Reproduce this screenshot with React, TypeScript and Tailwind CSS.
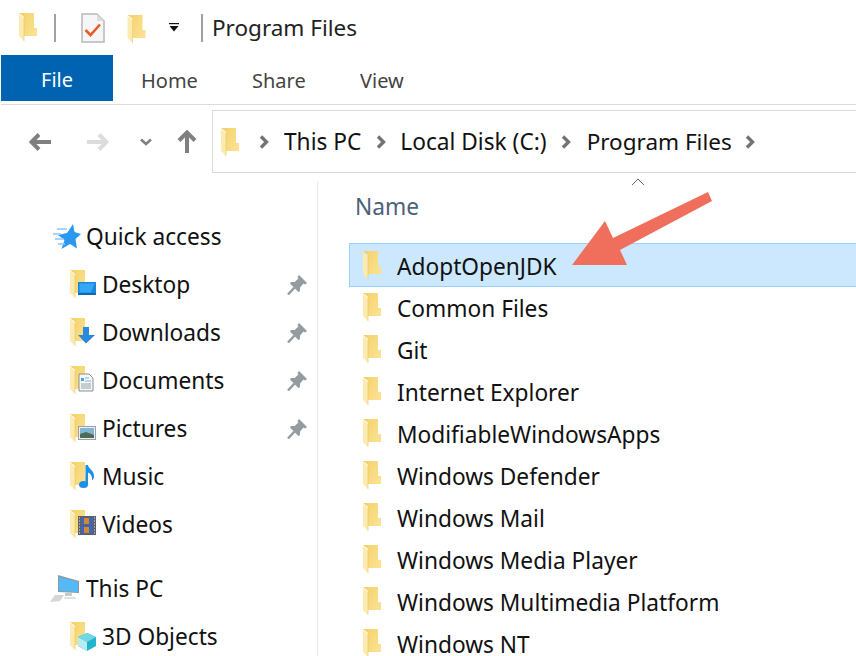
import { useId, type ReactNode } from 'react'

const mainFolders = [
  'AdoptOpenJDK',
  'Common Files',
  'Git',
  'Internet Explorer',
  'ModifiableWindowsApps',
  'Windows Defender',
  'Windows Mail',
  'Windows Media Player',
  'Windows Multimedia Platform',
  'Windows NT',
]

// folder drawn in an 18x28 box
function FolderShape() {
  const id = useId().replace(/[^a-zA-Z0-9]/g, '')
  return (
    <g>
      <defs>
        <linearGradient id={id} x1="0" y1="0" x2="1" y2="0.6">
          <stop offset="0" stopColor="#f3d067" />
          <stop offset="1" stopColor="#fbe08f" />
        </linearGradient>
      </defs>
      <path d="M0 0H15V15H18V23H5V4Z" fill={`url(#${id})`} />
      <path d="M0 1L5 5V28L0 23Z" fill="#fdeab0" />
      <path d="M5 5V28" stroke="#e8c660" strokeWidth="0.6" />
    </g>
  )
}

function Folder({ w = 18, h = 28 }: { w?: number; h?: number }) {
  return (
    <svg width={w} height={h} viewBox="0 0 18 28" className="shrink-0">
      <FolderShape />
    </svg>
  )
}

function NavFolder({ children }: { children: ReactNode }) {
  return (
    <svg width="28" height="30" viewBox="0 0 28 30" className="shrink-0">
      <FolderShape />
      {children}
    </svg>
  )
}

function Chevron() {
  return (
    <svg width="10" height="14" viewBox="0 0 10 14" className="shrink-0">
      <path d="M2 1.5L7.5 7L2 12.5" fill="none" stroke="#737373" strokeWidth="3.4" />
    </svg>
  )
}

function Pin() {
  return (
    <svg width="20" height="20" viewBox="0 0 20 20">
      <path d="M12 0L20 8L18 9.5L16.5 8.5L13 12.5L13 16L11.5 17L3 8.5L4 7L7.5 7L11.5 3.5L10.5 2Z" fill="#939ba1" />
      <path d="M7.5 12.5L1 19.5" stroke="#939ba1" strokeWidth="2.4" />
    </svg>
  )
}

const overlays: Record<string, ReactNode> = {
  Desktop: (
    <g>
      <rect x="8" y="12" width="18" height="13" fill="#1b86d8" />
      <path d="M9.5 13.5H24.5L21 22.5H9.5Z" fill="#35a8f5" />
      <path d="M8 23H26V25H8Z" fill="#0f69b4" />
    </g>
  ),
  Downloads: (
    <path d="M13 9H19V17H25L16 25.5L8 17H13Z" fill="#2a88dc" />
  ),
  Documents: (
    <g>
      <path d="M9 8H19L23 12V25H9Z" fill="#f4f6f8" stroke="#8b8f92" strokeWidth="1" />
      <path d="M11 12H14V15H11Z" fill="#4aa3e0" />
      <path d="M15 12H19M15 15H21" stroke="#7eb4da" strokeWidth="1" />
      <path d="M11 18H21M11 20H21M11 22H21" stroke="#93a4b0" strokeWidth="1" />
    </g>
  ),
  Pictures: (
    <g>
      <rect x="8.5" y="12.5" width="17" height="13" fill="#eef1f2" stroke="#9aa0a3" />
      <rect x="10" y="14" width="14" height="10" fill="#7fb6d6" />
      <path d="M10 20L16 18L24 21V24H10Z" fill="#4d6b57" />
    </g>
  ),
  Music: (
    <g>
      <ellipse cx="13.5" cy="22.5" rx="4.5" ry="3.5" fill="#1c8fe6" />
      <path d="M15.5 22V3H18C18.5 7 24 8 24 14C24 16 23 17.5 22 18.5C22.5 14 20.5 11.5 18 10.5V22Z" fill="#1c8fe6" />
    </g>
  ),
  Videos: (
    <g>
      <rect x="8" y="6" width="18" height="19" fill="#5c6066" />
      <rect x="11" y="7.5" width="12" height="7.5" fill="#3f66b8" />
      <rect x="11" y="16" width="12" height="7.5" fill="#3f66b8" />
      <path d="M14 8H19V14H14ZM14 17H19V23H14Z" fill="#d08a2e" />
      <path d="M9 8H10M9 11H10M9 14H10M9 17H10M9 20H10M9 23H10M24 8H25M24 11H25M24 14H25M24 17H25M24 20H25M24 23H25" stroke="#e4e6e8" strokeWidth="1.2" />
    </g>
  ),
  '3D Objects': (
    <g>
      <path d="M17 11L26 15V24L17 29L8 24V15Z" fill="#24b3cf" />
      <path d="M8 15L17 20V29L8 24Z" fill="#b5eef2" />
      <path d="M17 11L26 15L17 20L8 15Z" fill="#6fd8e4" />
    </g>
  ),
}

function NavItem({ label, pinned }: { label: string; pinned?: boolean }) {
  return (
    <div className="flex h-[48px] items-center pl-[70px]">
      <NavFolder>{overlays[label]}</NavFolder>
      <span className="ml-[4px] w-[185px]">{label}</span>
      {pinned && <Pin />}
    </div>
  )
}

function StarIcon() {
  return (
    <svg width="28" height="26" viewBox="0 0 28 26" className="shrink-0">
      <path d="M20 0L21.5 8L28 10L22.5 15L24 24.5L17 20L8.5 25L11.5 16L5 11L14 9Z" fill="#2c97f0" />
      <path d="M4 5H14M0 10H8M2 15H11M5 20H12" stroke="#8cc8f5" strokeWidth="1.3" />
    </svg>
  )
}

function PcIcon() {
  return (
    <svg width="32" height="28" viewBox="0 0 32 28" className="shrink-0">
      <path d="M8 0L29 6V18L8 17Z" fill="#8a9aa5" />
      <path d="M9 2L28 7V17L9 16Z" fill="#55b9f5" />
      <path d="M15 18H22V21H15Z" fill="#c5cacd" />
      <path d="M5 20L14 20L10 26L0 27Z" fill="#d4d7d9" />
      <path d="M15 22H25L26 24H14Z" fill="#dfe1e3" />
    </svg>
  )
}

export default function App() {
  return (
    <div className="flex h-[656px] w-[856px] flex-col overflow-hidden bg-white text-[22.7px] text-[#111] font-['Noto_Sans',sans-serif]">
      {/* title bar */}
      <div className="flex h-[55px] shrink-0 items-center">
        <div className="ml-[19px] flex h-[28px] -translate-y-[1px]">
          <Folder />
        </div>
        <div className="ml-[17px] h-[28px] w-[2px] bg-[#a0a0a0]" />
        <svg width="24" height="30" viewBox="0 0 24 30" className="ml-[25px] shrink-0">
          <path d="M1 1H16L23 8V29H1Z" fill="#f5f6f8" stroke="#b8b8b8" strokeWidth="1.5" />
          <path d="M16 1V8H23Z" fill="#dcdcdc" />
          <path d="M4.5 17L9.5 22L19 11.5" fill="none" stroke="#ee5a24" strokeWidth="2.6" />
        </svg>
        <div className="ml-[22px] flex translate-y-[1px]">
          <Folder w={19} />
        </div>
        <svg width="12" height="9" viewBox="0 0 12 9" className="ml-[22px] shrink-0">
          <path d="M1 0.5H11" stroke="#111" strokeWidth="1.4" />
          <path d="M1.5 3H10.5L6 8.5Z" fill="#111" />
        </svg>
        <div className="ml-[21px] h-[28px] w-[2px] bg-[#a0a0a0]" />
        <span className="ml-[9px] text-[22.5px] text-[#222]">Program Files</span>
      </div>

      {/* ribbon tabs */}
      <div className="flex h-[46px] shrink-0 items-center pl-px text-[20px] text-[#444]">
        <div className="flex h-full w-[112px] items-center justify-center bg-[#0063b1] pt-[4px] text-white">File</div>
        <span className="ml-[28px] w-[111px] pt-[6px]">Home</span>
        <span className="w-[108px] pt-[6px]">Share</span>
        <span className="pt-[6px]">View</span>
      </div>
      <div className="ml-px mt-[3px] h-[1px] shrink-0 bg-[#dcdcdc]" />

      {/* nav + address */}
      <div className="mt-[5px] flex h-[63px] shrink-0">
        <div className="flex w-[212px] shrink-0 items-center pl-[29px]">
          <svg width="22" height="18" viewBox="0 0 22 18" className="shrink-0">
            <path d="M22 9H3M10 1.5L2.5 9L10 16.5" fill="none" stroke="#7f7f7f" strokeWidth="4" />
          </svg>
          <svg width="22" height="18" viewBox="0 0 22 18" className="ml-[36px] shrink-0">
            <path d="M0 9H19M12 1.5L19.5 9L12 16.5" fill="none" stroke="#dcdcdc" strokeWidth="4" />
          </svg>
          <svg width="12" height="8" viewBox="0 0 12 8" className="ml-[31px] shrink-0">
            <path d="M1 1.5L6 6L11 1.5" fill="none" stroke="#808080" strokeWidth="2.6" />
          </svg>
          <svg width="20" height="23" viewBox="0 0 20 23" className="ml-[25px] shrink-0">
            <path d="M10 23V3M2 10.5L10 2.5L18 10.5" fill="none" stroke="#7f7f7f" strokeWidth="4" />
          </svg>
        </div>
        <div className="flex flex-1 items-center border-y border-l border-[#d9d9d9] pl-[7px] text-[#111]">
          <Folder w={20} />
          <div className="ml-[19px]"><Chevron /></div>
          <span className="ml-[15px] pt-[2px]">This PC</span>
          <div className="ml-[15px]"><Chevron /></div>
          <span className="ml-[14px] pt-[2px]">Local Disk (C:)</span>
          <div className="ml-[14px]"><Chevron /></div>
          <span className="ml-[16px] text-[22.5px]">Program Files</span>
          <div className="ml-[13px]"><Chevron /></div>
        </div>
      </div>

      {/* body */}
      <div className="mt-[8px] flex min-h-0 flex-1">
        <div className="w-[318px] shrink-0 border-r border-[#e8e8e8] pt-[32px]">
          <div className="flex h-[48px] items-center pl-[53px]">
            <StarIcon />
            <span className="ml-[5px]">Quick access</span>
          </div>
          <NavItem label="Desktop" pinned />
          <NavItem label="Downloads" pinned />
          <NavItem label="Documents" pinned />
          <NavItem label="Pictures" pinned />
          <NavItem label="Music" />
          <NavItem label="Videos" />
          <div className="mt-[16px] flex h-[48px] items-center pl-[50px]">
            <PcIcon />
            <span className="ml-[4px]">This PC</span>
          </div>
          <NavItem label="3D Objects" />
        </div>

        <div className="relative min-w-0 flex-1 pl-[32px]">
          <div className="flex h-[63px] flex-col">
            <svg width="14" height="8" viewBox="0 0 14 8" className="ml-[281px] mt-[-3px] shrink-0">
              <path d="M1 7L7 1L13 7" fill="none" stroke="#666" strokeWidth="1" />
            </svg>
            <span className="ml-[5px] mt-[4px] text-[#4c607a]">Name</span>
          </div>
          {mainFolders.map((name, i) => (
            <div
              key={name}
              className={`flex h-[42px] items-center pl-[12px] ${i === 0 ? 'bg-[#cce8ff] outline-1 outline-[#99d1ff]' : ''}`}
            >
              <Folder w={20} h={28} />
              <span className="ml-[15px] whitespace-nowrap pt-[4px]">{name}</span>
            </div>
          ))}

          {/* annotation arrow over the list */}
          <svg width="856" height="656" viewBox="0 0 856 656" className="pointer-events-none absolute left-[-318px] top-[-181px]">
            <path
              d="M708 192L712 201L620 250L627 265H572L605 221L613 238Z"
              fill="#ef6f5c"
            />
          </svg>
        </div>
      </div>
    </div>
  )
}
